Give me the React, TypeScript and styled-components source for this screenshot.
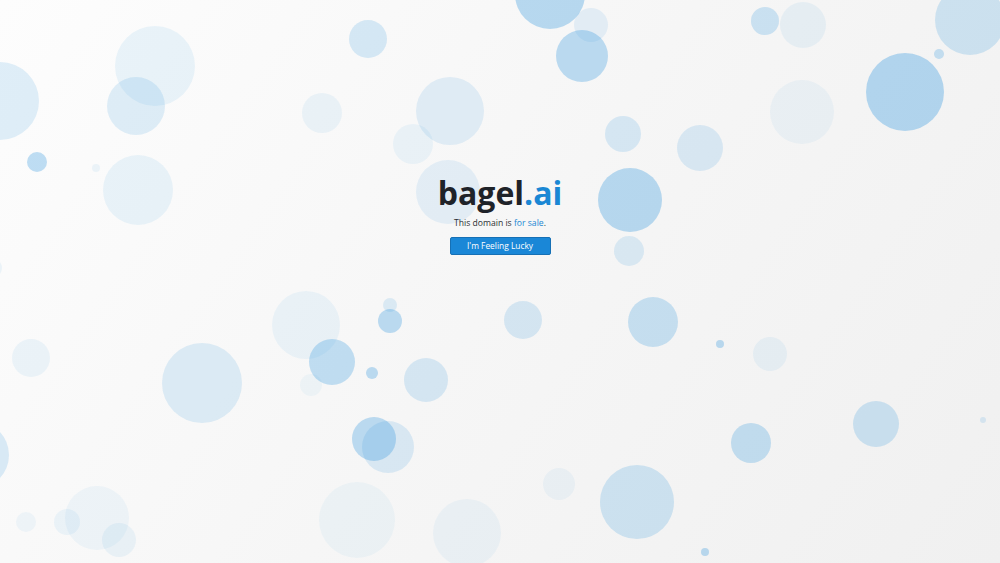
import styled, { createGlobalStyle } from "styled-components";

const GlobalStyle = createGlobalStyle`
  * {
    box-sizing: border-box;
  }

  html, body {
    margin: 0;
    padding: 0;
    height: 100%;
    font-family: "Open Sans", "Noto Sans", Arial, sans-serif;
    -webkit-font-smoothing: antialiased;
  }

  #root {
    height: 100%;
  }
`;

// x, y = centre, r = radius, a = strength of the blue
type BubbleData = { x: number; y: number; r: number; a: number };

const BUBBLES: BubbleData[] = [
  { x: 550, y: -6, r: 35, a: 0.32 },
  { x: 591, y: 25, r: 17, a: 0.1 },
  { x: 582, y: 56, r: 26, a: 0.3 },
  { x: 368, y: 39, r: 19, a: 0.18 },
  { x: 155, y: 66, r: 40, a: 0.09 },
  { x: 136, y: 106, r: 29, a: 0.14 },
  { x: 0, y: 101, r: 39, a: 0.14 },
  { x: 37, y: 162, r: 10, a: 0.3 },
  { x: 96, y: 168, r: 4, a: 0.08 },
  { x: 138, y: 190, r: 35, a: 0.09 },
  { x: 322, y: 113, r: 20, a: 0.08 },
  { x: 450, y: 111, r: 34, a: 0.12 },
  { x: 413, y: 144, r: 20, a: 0.07 },
  { x: 448, y: 192, r: 32, a: 0.1 },
  { x: 623, y: 134, r: 18, a: 0.16 },
  { x: 700, y: 148, r: 23, a: 0.15 },
  { x: 630, y: 200, r: 32, a: 0.32 },
  { x: 629, y: 251, r: 15, a: 0.14 },
  { x: 765, y: 21, r: 14, a: 0.22 },
  { x: 803, y: 25, r: 23, a: 0.08 },
  { x: 802, y: 112, r: 32, a: 0.06 },
  { x: 905, y: 92, r: 39, a: 0.34 },
  { x: 939, y: 54, r: 5, a: 0.25 },
  { x: 970, y: 20, r: 35, a: 0.2 },
  { x: -8, y: 268, r: 10, a: 0.08 },
  { x: 306, y: 325, r: 34, a: 0.07 },
  { x: 390, y: 305, r: 7, a: 0.14 },
  { x: 390, y: 321, r: 12, a: 0.3 },
  { x: 523, y: 320, r: 19, a: 0.17 },
  { x: 653, y: 322, r: 25, a: 0.24 },
  { x: 720, y: 344, r: 4, a: 0.3 },
  { x: 770, y: 354, r: 17, a: 0.07 },
  { x: 31, y: 358, r: 19, a: 0.08 },
  { x: 202, y: 383, r: 40, a: 0.14 },
  { x: 332, y: 362, r: 23, a: 0.28 },
  { x: 311, y: 385, r: 11, a: 0.05 },
  { x: 372, y: 373, r: 6, a: 0.3 },
  { x: 426, y: 380, r: 22, a: 0.17 },
  { x: 374, y: 439, r: 22, a: 0.3 },
  { x: 388, y: 447, r: 26, a: 0.15 },
  { x: -25, y: 455, r: 34, a: 0.16 },
  { x: 751, y: 443, r: 20, a: 0.26 },
  { x: 876, y: 424, r: 23, a: 0.21 },
  { x: 983, y: 420, r: 3, a: 0.15 },
  { x: 559, y: 484, r: 16, a: 0.06 },
  { x: 637, y: 502, r: 37, a: 0.2 },
  { x: 705, y: 552, r: 4, a: 0.3 },
  { x: 97, y: 518, r: 32, a: 0.06 },
  { x: 67, y: 522, r: 13, a: 0.07 },
  { x: 26, y: 522, r: 10, a: 0.06 },
  { x: 119, y: 540, r: 17, a: 0.08 },
  { x: 357, y: 520, r: 38, a: 0.05 },
  { x: 467, y: 533, r: 34, a: 0.06 },
];

const App = () => {
  return (
    <>
      <GlobalStyle />
      <Page>
        {/* floating bubbles behind everything */}
        <BubbleLayer aria-hidden="true">
          {BUBBLES.map((b, i) => (
            <Bubble key={i} $x={b.x} $y={b.y} $r={b.r} $a={b.a} />
          ))}
        </BubbleLayer>

        <Content>
          <Logo>
            bagel<LogoTld>.ai</LogoTld>
          </Logo>
          <Tagline>
            This domain is <SaleLink href="#">for sale</SaleLink>.
          </Tagline>
          <LuckyButton type="button">I'm Feeling Lucky</LuckyButton>
        </Content>
      </Page>
    </>
  );
};

export default App;

const Page = styled.div`
  position: relative;
  width: 100%;
  height: 100%;
  min-height: 563px;
  overflow: hidden;
  background: linear-gradient(125deg, #fdfdfd 0%, #f6f6f6 50%, #f0f0f0 100%);
`;

const BubbleLayer = styled.div`
  position: absolute;
  inset: 0;
  pointer-events: none;
`;

const Bubble = styled.div<{ $x: number; $y: number; $r: number; $a: number }>`
  position: absolute;
  left: ${(p) => p.$x - p.$r}px;
  top: ${(p) => p.$y - p.$r}px;
  width: ${(p) => p.$r * 2}px;
  height: ${(p) => p.$r * 2}px;
  border-radius: 50%;
  background: rgba(46, 150, 222, ${(p) => p.$a});
`;

const Content = styled.main`
  position: relative;
  display: flex;
  flex-direction: column;
  align-items: center;
  padding-top: 171px;
`;

const Logo = styled.h1`
  margin: 0;
  font-family: "Open Sans", "Noto Sans", Arial, sans-serif;
  font-weight: 700;
  font-size: 32px;
  line-height: 43px;
  letter-spacing: 0;
  color: #1f2329;
`;

const LogoTld = styled.span`
  color: #1a87d4;
`;

const Tagline = styled.p`
  margin: 2px 0 0;
  font-size: 8.6px;
  line-height: 14px;
  color: #2b2f33;
`;

const SaleLink = styled.a`
  color: #1a87d4;
  text-decoration: none;
`;

const LuckyButton = styled.button`
  margin-top: 7px;
  width: 101px;
  height: 18px;
  padding: 0;
  border: 1px solid #1670b5;
  border-radius: 2px;
  background: #1a87d7;
  color: #ffffff;
  font-family: "Open Sans", "Noto Sans", Arial, sans-serif;
  font-size: 8.4px;
  line-height: 16px;
  cursor: pointer;
`;
